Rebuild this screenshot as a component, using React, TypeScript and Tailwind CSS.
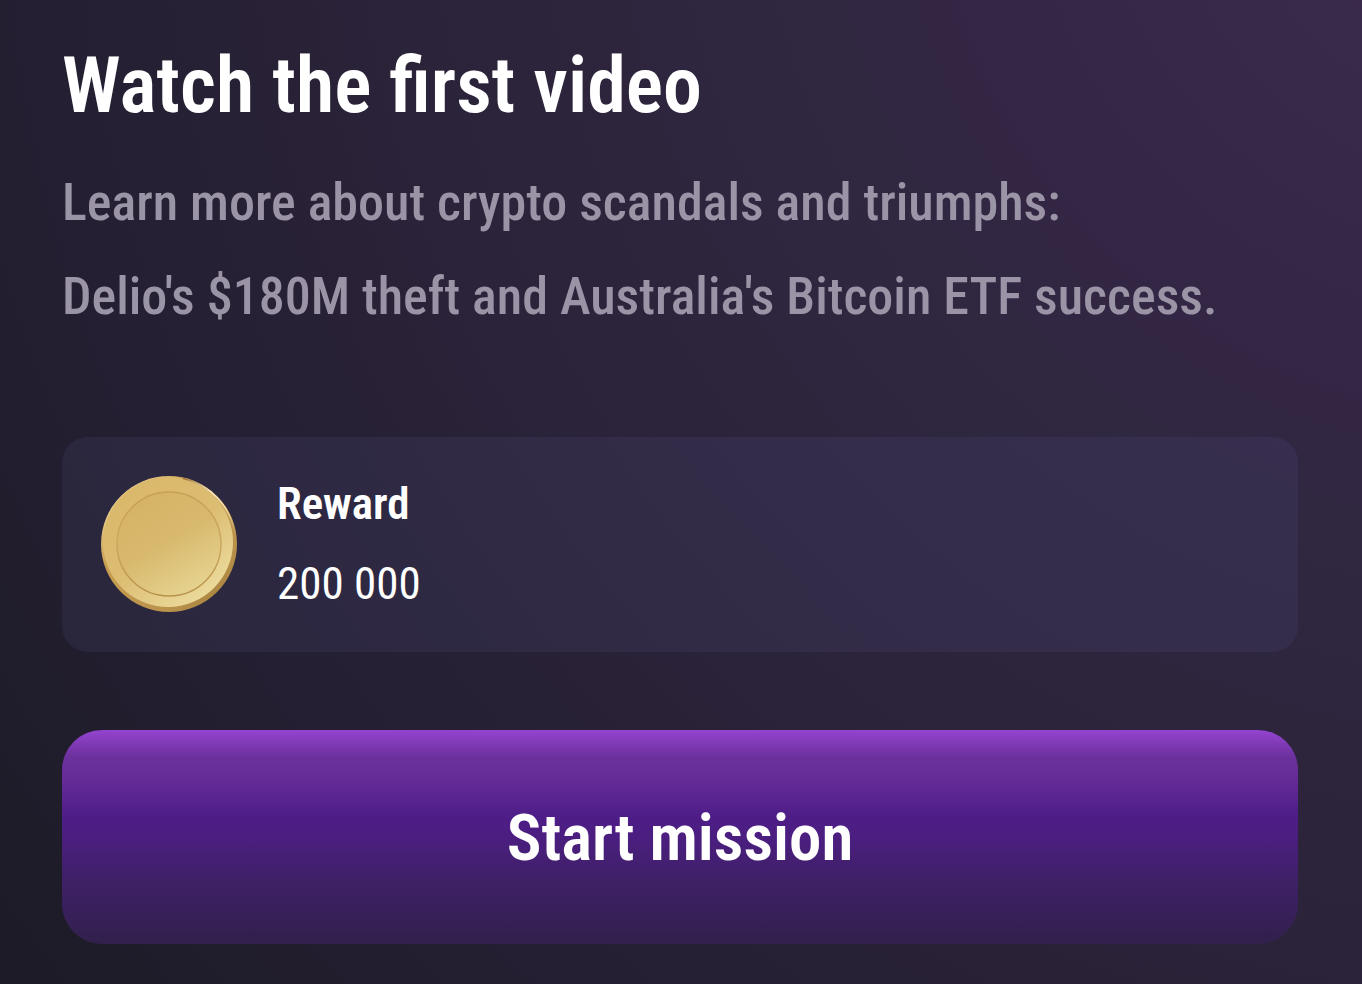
function Coin() {
  return (
    <svg viewBox="0 0 136 136" className="size-34 shrink-0" aria-hidden="true">
      <defs>
        <linearGradient id="coin-edge" x1="0.1" y1="0.1" x2="0.9" y2="0.9">
          <stop offset="0" stopColor="#f3dba0" />
          <stop offset="0.3" stopColor="#c79d50" />
          <stop offset="0.8" stopColor="#b9924b" />
          <stop offset="1" stopColor="#a9833f" />
        </linearGradient>
        <linearGradient id="coin-rim" x1="0.15" y1="0.1" x2="0.8" y2="0.95">
          <stop offset="0" stopColor="#dab86b" />
          <stop offset="0.5" stopColor="#dcbd72" />
          <stop offset="1" stopColor="#ecdc9e" />
        </linearGradient>
        <linearGradient id="coin-face" x1="0.25" y1="0.1" x2="0.75" y2="0.95">
          <stop offset="0" stopColor="#d6b467" />
          <stop offset="0.45" stopColor="#d8b96e" />
          <stop offset="1" stopColor="#e6d38f" />
        </linearGradient>
        <linearGradient id="coin-groove" x1="0" y1="0" x2="0" y2="1">
          <stop offset="0" stopColor="#c5a056" />
          <stop offset="0.5" stopColor="#cba960" />
          <stop offset="1" stopColor="#b8924a" />
        </linearGradient>
        <linearGradient id="coin-shine" x1="0" y1="0" x2="1" y2="1">
          <stop offset="0" stopColor="#9c7638" />
          <stop offset="0.4" stopColor="#fbeecb" />
          <stop offset="0.7" stopColor="#f0dca6" />
          <stop offset="1" stopColor="#b9924b" />
        </linearGradient>
      </defs>
      <circle cx="68" cy="68" r="68" fill="url(#coin-edge)" />
      <circle cx="67" cy="66" r="65" fill="url(#coin-rim)" />
      <path
        d="M82 2.5 A67 67 0 0 1 134 58"
        fill="none"
        stroke="url(#coin-shine)"
        strokeWidth="1.5"
      />
      <circle
        cx="68"
        cy="68"
        r="52"
        fill="url(#coin-face)"
        stroke="url(#coin-groove)"
        strokeWidth="1.5"
      />
    </svg>
  );
}

export default function App() {
  return (
    <main className="min-h-screen bg-[radial-gradient(circle_at_112%_-18%,#3c2b4e_0%,#39294a_14%,#352646_28%,#302741_38%,#2b2339_60%,#241f32_78%,#1d1b27_100%)] pt-10 pr-16 pb-10 pl-[62px] font-['Roboto_Condensed','Roboto',sans-serif] text-white">
      <h1 className="text-[78px] leading-[92px] font-semibold">
        Watch the first video
      </h1>
      <p className="mt-6 text-[52px] leading-[94px] font-medium text-[#9a94a6]">
        Learn more about crypto scandals and triumphs:
        <br />
        Delio's $180M theft and Australia's Bitcoin ETF success.
      </p>

      <section className="mt-[93px] flex items-center gap-10 rounded-[26px] bg-[#6468a0]/13 px-[39px] pt-[27px] pb-7">
        <Coin />
        <div className="text-[45px] leading-[80px]">
          <h2 className="font-semibold">Reward</h2>
          <p>200 000</p>
        </div>
      </section>

      <button
        type="button"
        className="mt-[78px] h-[214px] w-full rounded-[40px] bg-[linear-gradient(180deg,#9444d0_0%,#6b309b_13%,#642b97_24%,#4e1d88_40%,#4b1e80_50%,#3f2067_70%,#31204c_100%)] pt-1 text-[65px] font-semibold"
      >
        Start mission
      </button>
    </main>
  );
}
